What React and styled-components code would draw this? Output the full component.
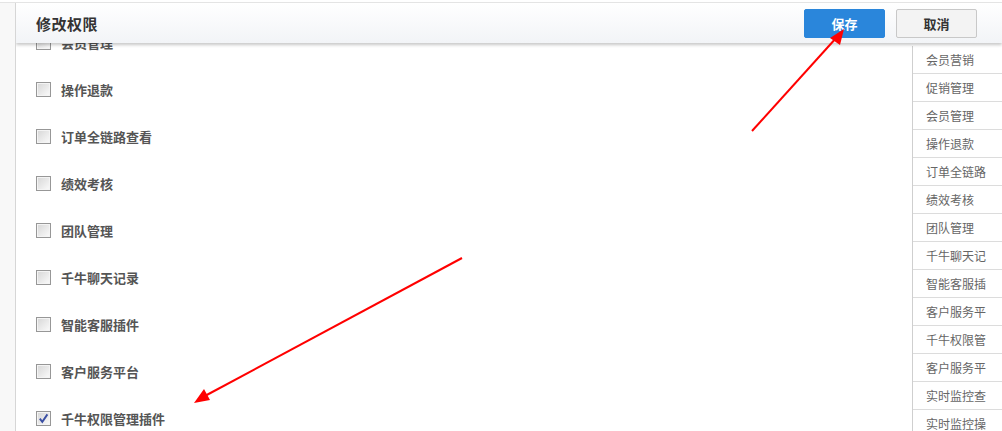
import React from "react";
import styled, { createGlobalStyle } from "styled-components";

const Global = createGlobalStyle`
  html, body { margin: 0; padding: 0; background: #fff; }
  body { width: 1002px; height: 431px; overflow: hidden; font-family: "Noto Sans CJK SC", "Noto Sans", sans-serif; }
`;

const Page = styled.div`
  position: relative;
  width: 1002px;
  height: 431px;
  overflow: hidden;
  display: flex;
  flex-direction: column;
  padding-top: 2px;
  box-sizing: border-box;
`;

const Frame = styled.div`
  flex: 1;
  display: flex;
  border-top: 1px solid #e4e4e4;
  min-height: 0;
`;

const Gutter = styled.div`
  width: 15px;
  background: #f8f8f8;
  border-right: 1px solid #d6d6d6;
  flex-shrink: 0;
`;

const Main = styled.div`
  position: relative;
  flex: 1;
  display: flex;
  min-width: 0;
  overflow: hidden;
`;

const Header = styled.div`
  position: absolute;
  top: 0;
  left: 0;
  right: 0;
  height: 40px;
  display: flex;
  align-items: center;
  padding: 0 25px 0 20px;
  background: linear-gradient(#ffffff, #f2f4f7);
  box-shadow: 0 2px 3px rgba(0, 0, 0, 0.22);
  z-index: 2;
`;

const Title = styled.div`
  flex: 1;
  font-size: 15px;
  font-weight: bold;
  color: #333;
  letter-spacing: 0.5px;
`;

const Button = styled.button`
  width: 81px;
  height: 29px;
  margin-left: 11px;
  border-radius: 2px;
  font-family: inherit;
  font-size: 13px;
  font-weight: bold;
  cursor: pointer;
  border: 1px solid ${(p) => (p.$primary ? "#2a86db" : "#c8c8c8")};
  background: ${(p) => (p.$primary ? "#2a86db" : "#f3f3f3")};
  color: ${(p) => (p.$primary ? "#fff" : "#333")};
  padding: 0;
`;

const LeftList = styled.div`
  flex: 1;
  padding: 16px 0 0 20px;
`;

const Item = styled.label`
  height: 47px;
  display: flex;
  align-items: center;
  gap: 10px;
  font-size: 13px;
  font-weight: bold;
  color: #555;
`;

const Box = styled.span`
  width: 15px;
  height: 15px;
  box-sizing: border-box;
  border: 1px solid #979797;
  background: linear-gradient(135deg, #d6d6d6, #fbfbfb);
  box-shadow: inset 0 0 0 1px #f4f4f4;
  display: flex;
  align-items: center;
  justify-content: center;
  flex-shrink: 0;
`;

const RightNav = styled.div`
  width: 89px;
  margin-top: 43px;
  border-left: 1px solid #cfcfcf;
  flex-shrink: 0;
`;

const NavRow = styled.div`
  height: 27px;
  border-bottom: 1px solid #dcdcdc;
  display: flex;
  align-items: center;
  padding-left: 13px;
  font-size: 12px;
  color: #666;
  white-space: nowrap;
  overflow: hidden;
`;

const Arrows = styled.svg`
  position: absolute;
  left: 0;
  top: 0;
  pointer-events: none;
  z-index: 5;
`;

const left = [
  "会员管理",
  "操作退款",
  "订单全链路查看",
  "绩效考核",
  "团队管理",
  "千牛聊天记录",
  "智能客服插件",
  "客户服务平台",
  "千牛权限管理插件",
];

const right = [
  "会员营销",
  "促销管理",
  "会员管理",
  "操作退款",
  "订单全链路",
  "绩效考核",
  "团队管理",
  "千牛聊天记",
  "智能客服插",
  "客户服务平",
  "千牛权限管",
  "客户服务平",
  "实时监控查",
  "实时监控操",
];

function Check({ checked }) {
  return (
    <Box>
      {checked && (
        <svg width="11" height="11" viewBox="0 0 11 11">
          <path d="M1.8 5.6 L4.3 8.8 L9.4 1.4" fill="none" stroke="#3b4fa3" strokeWidth="1.9" />
        </svg>
      )}
    </Box>
  );
}

export default function App() {
  return (
    <>
      <Global />
      <Page>
        <Frame>
          <Gutter />
          <Main>
            <Header>
              <Title>修改权限</Title>
              <Button $primary>保存</Button>
              <Button>取消</Button>
            </Header>
            <LeftList>
              {left.map((t, i) => (
                <Item key={i}>
                  <Check checked={i === left.length - 1} />
                  {t}
                </Item>
              ))}
            </LeftList>
            <RightNav>
              {right.map((t, i) => (
                <NavRow key={i}>{t}</NavRow>
              ))}
            </RightNav>
          </Main>
        </Frame>
        <Arrows width="1002" height="431" viewBox="0 0 1002 431">
          <line x1="752" y1="131" x2="837" y2="37" stroke="#f00" strokeWidth="2" />
          <polygon points="844,29 830,38 840,45" fill="#f00" />
          <line x1="462" y1="258" x2="203" y2="397" stroke="#f00" strokeWidth="2" />
          <polygon points="194,403 204,389 210,400" fill="#f00" />
        </Arrows>
      </Page>
    </>
  );
}
